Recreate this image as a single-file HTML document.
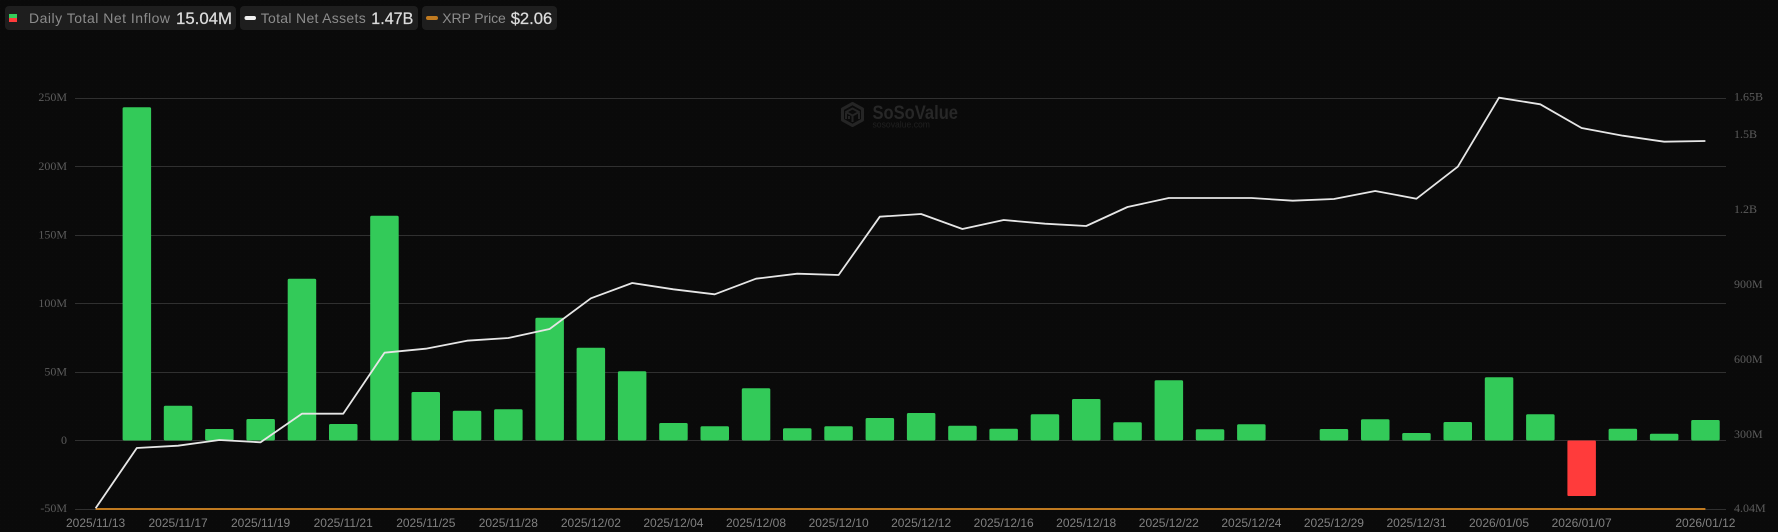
<!DOCTYPE html>
<html>
<head>
<meta charset="utf-8">
<style>
html,body{margin:0;padding:0;background:#0a0a0a;width:1778px;height:532px;overflow:hidden}
svg{display:block}
.l{font:12px "Liberation Serif",serif;fill:#5c5c5c}
.d{font:12px "Liberation Sans",sans-serif;fill:#808080;text-anchor:middle}
.n{font:14px "Liberation Sans",sans-serif;fill:#8c8c8c}
.v{font:16.8px "Liberation Sans",sans-serif;fill:#dcdcdc;stroke:#dcdcdc;stroke-width:.25}
</style>
</head>
<body>
<svg width="1778" height="532" viewBox="0 0 1778 532" xmlns="http://www.w3.org/2000/svg">
<defs>
<pattern id="tx" width="4" height="4" patternUnits="userSpaceOnUse"><rect width="4" height="4" fill="#0a0a0a"/><rect width="1" height="1" fill="#0c0c0c"/></pattern>
</defs>
<rect width="1778" height="532" fill="url(#tx)"/>

<!-- legend -->
<rect x="5" y="6" width="231" height="24" rx="4" fill="#1e1e1e"/>
<rect x="9" y="14" width="8" height="4" fill="#34cc5a"/>
<rect x="9" y="18" width="8" height="4" fill="#ff3b3b"/>
<text class="n" x="29" y="23" textLength="141" lengthAdjust="spacing">Daily Total Net Inflow</text>
<text class="v" x="176" y="24" textLength="56" lengthAdjust="spacingAndGlyphs">15.04M</text>

<rect x="240" y="6" width="178" height="24" rx="4" fill="#1e1e1e"/>
<rect x="244.500" y="16" width="11.500" height="4" rx="2" fill="#f0f0f0"/>
<text class="n" x="260.700" y="23" textLength="105" lengthAdjust="spacing">Total Net Assets</text>
<text class="v" x="371.300" y="24" textLength="42" lengthAdjust="spacingAndGlyphs">1.47B</text>

<rect x="422" y="6" width="135" height="24" rx="4" fill="#1e1e1e"/>
<rect x="426" y="16" width="12" height="4" rx="2" fill="#c07a20"/>
<text class="n" x="442.300" y="23" textLength="63.500" lengthAdjust="spacing">XRP Price</text>
<text class="v" x="510.700" y="24" textLength="41.500" lengthAdjust="spacingAndGlyphs">$2.06</text>

<!-- grid -->
<g stroke="#303030" stroke-width="1">
<path d="M75 98.500H1726M75 166.500H1726M75 235.500H1726M75 303.500H1726M75 372.500H1726M75 440.500H1726M75 509.500H1726"/>
</g>

<!-- watermark -->
<g fill="none" stroke="#252525" stroke-width="3" stroke-linejoin="round">
<path d="M852.500 103.500L862.500 109V120L852.500 125.500L842.500 120V109Z"/>
<path d="M846 112L852.500 108.500L859 112L852.500 115.500Z" stroke-width="2"/>
<path d="M846 113V119M852.500 116V122M859 113V119M849 116V119" stroke-width="2"/>
</g>
<text x="872.500" y="119" font-family="Liberation Sans" font-weight="bold" font-size="19" fill="#272727" textLength="85.500" lengthAdjust="spacingAndGlyphs">SoSoValue</text>
<text x="872.500" y="127.500" font-family="Liberation Sans" font-size="9.500" fill="#202020" textLength="57.500" lengthAdjust="spacingAndGlyphs">sosovalue.com</text>

<!-- bars -->
<g fill="#33ca59">
<rect x="122.600" y="107.300" width="28.500" height="333.200" rx="1.500"/>
<rect x="163.800" y="405.700" width="28.500" height="34.800" rx="1.500"/>
<rect x="205.100" y="429" width="28.500" height="11.500" rx="1.500"/>
<rect x="246.400" y="419" width="28.500" height="21.500" rx="1.500"/>
<rect x="287.700" y="278.700" width="28.500" height="161.800" rx="1.500"/>
<rect x="329" y="424" width="28.500" height="16.500" rx="1.500"/>
<rect x="370.200" y="215.700" width="28.500" height="224.800" rx="1.500"/>
<rect x="411.500" y="392" width="28.500" height="48.500" rx="1.500"/>
<rect x="452.800" y="410.700" width="28.500" height="29.800" rx="1.500"/>
<rect x="494.100" y="409.300" width="28.500" height="31.200" rx="1.500"/>
<rect x="535.400" y="317.700" width="28.500" height="122.800" rx="1.500"/>
<rect x="576.600" y="347.700" width="28.500" height="92.800" rx="1.500"/>
<rect x="617.900" y="371.300" width="28.500" height="69.200" rx="1.500"/>
<rect x="659.200" y="423" width="28.500" height="17.500" rx="1.500"/>
<rect x="700.500" y="426.300" width="28.500" height="14.200" rx="1.500"/>
<rect x="741.800" y="388.300" width="28.500" height="52.200" rx="1.500"/>
<rect x="783" y="428.300" width="28.500" height="12.200" rx="1.500"/>
<rect x="824.300" y="426.300" width="28.500" height="14.200" rx="1.500"/>
<rect x="865.600" y="418" width="28.500" height="22.500" rx="1.500"/>
<rect x="906.900" y="413" width="28.500" height="27.500" rx="1.500"/>
<rect x="948.200" y="425.700" width="28.500" height="14.800" rx="1.500"/>
<rect x="989.400" y="428.700" width="28.500" height="11.800" rx="1.500"/>
<rect x="1030.700" y="414.300" width="28.500" height="26.200" rx="1.500"/>
<rect x="1072" y="399" width="28.500" height="41.500" rx="1.500"/>
<rect x="1113.300" y="422.300" width="28.500" height="18.200" rx="1.500"/>
<rect x="1154.600" y="380.300" width="28.500" height="60.200" rx="1.500"/>
<rect x="1195.800" y="429.300" width="28.500" height="11.200" rx="1.500"/>
<rect x="1237.100" y="424.300" width="28.500" height="16.200" rx="1.500"/>
<rect x="1319.700" y="429" width="28.500" height="11.500" rx="1.500"/>
<rect x="1361" y="419.300" width="28.500" height="21.200" rx="1.500"/>
<rect x="1402.200" y="433" width="28.500" height="7.500" rx="1.500"/>
<rect x="1443.500" y="422" width="28.500" height="18.500" rx="1.500"/>
<rect x="1484.800" y="377.300" width="28.500" height="63.200" rx="1.500"/>
<rect x="1526.100" y="414.300" width="28.500" height="26.200" rx="1.500"/>
<rect x="1608.600" y="428.700" width="28.500" height="11.800" rx="1.500"/>
<rect x="1649.900" y="433.700" width="28.500" height="6.800" rx="1.500"/>
<rect x="1691.200" y="420" width="28.500" height="20.500" rx="1.500"/>
</g>
<rect x="1567.400" y="440.500" width="28.500" height="55.500" rx="1" fill="#ff3b3b"/>

<!-- lines -->
<path d="M95.600 509H1705.400" fill="none" stroke="#c07a20" stroke-width="2"/>
<polyline fill="none" stroke="#e6e6e6" stroke-width="1.800" stroke-linejoin="round" points="95.600,508.300 136.800,448 178.100,445.700 219.400,440 260.600,442.300 301.900,413.700 343.200,413.700 384.500,352.700 425.800,348.700 467,340.700 508.300,338 549.600,329 590.900,298.300 632.200,283 673.400,289.300 714.700,294.300 756,278.700 797.300,273.700 838.600,275 879.800,216.700 921.100,214 962.400,229 1003.700,220 1045,223.700 1086.200,226 1127.500,207 1168.800,198 1210.100,198 1251.400,198 1292.700,200.700 1333.900,199 1375.200,191 1416.500,198.700 1457.800,166.700 1499,97.700 1540.300,104.300 1581.600,128 1622.900,135.700 1664.200,141.700 1705.400,141"/>

<!-- left axis -->
<text class="l" x="67" y="101" text-anchor="end">250M</text>
<text class="l" x="67" y="170" text-anchor="end">200M</text>
<text class="l" x="67" y="238.500" text-anchor="end">150M</text>
<text class="l" x="67" y="307" text-anchor="end">100M</text>
<text class="l" x="67" y="375.500" text-anchor="end">50M</text>
<text class="l" x="67" y="444" text-anchor="end">0</text>
<text class="l" x="67" y="512" text-anchor="end">-50M</text>

<!-- right axis -->
<text class="l" x="1734" y="100.700">1.65B</text>
<text class="l" x="1734" y="138">1.5B</text>
<text class="l" x="1734" y="213">1.2B</text>
<text class="l" x="1734" y="288">900M</text>
<text class="l" x="1734" y="363">600M</text>
<text class="l" x="1734" y="438">300M</text>
<text class="l" x="1734" y="512">4.04M</text>

<!-- x axis -->
<text class="d" x="95.600" y="527">2025/11/13</text>
<text class="d" x="178.100" y="527">2025/11/17</text>
<text class="d" x="260.600" y="527">2025/11/19</text>
<text class="d" x="343.200" y="527">2025/11/21</text>
<text class="d" x="425.800" y="527">2025/11/25</text>
<text class="d" x="508.300" y="527">2025/11/28</text>
<text class="d" x="590.900" y="527">2025/12/02</text>
<text class="d" x="673.400" y="527">2025/12/04</text>
<text class="d" x="756" y="527">2025/12/08</text>
<text class="d" x="838.600" y="527">2025/12/10</text>
<text class="d" x="921.100" y="527">2025/12/12</text>
<text class="d" x="1003.700" y="527">2025/12/16</text>
<text class="d" x="1086.200" y="527">2025/12/18</text>
<text class="d" x="1168.800" y="527">2025/12/22</text>
<text class="d" x="1251.400" y="527">2025/12/24</text>
<text class="d" x="1333.900" y="527">2025/12/29</text>
<text class="d" x="1416.500" y="527">2025/12/31</text>
<text class="d" x="1499" y="527">2026/01/05</text>
<text class="d" x="1581.600" y="527">2026/01/07</text>
<text class="d" x="1705.400" y="527">2026/01/12</text>
</svg>
</body>
</html>
